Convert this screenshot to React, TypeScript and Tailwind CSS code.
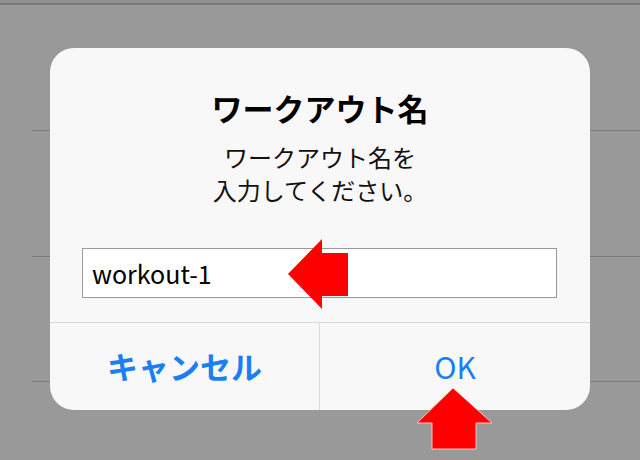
import React from "react";

const jp = { fontFamily: '"Noto Sans CJK JP", "Noto Sans", sans-serif' };

export default function App() {
  return (
    <div className="relative w-[640px] h-[460px] overflow-hidden bg-[#999999]" style={jp}>
      {/* background list behind the overlay */}
      <div className="flex flex-col">
        <div className="h-[3px] bg-[#8f8f8f]" />
        <div className="h-[2px] bg-[#7a7a7a]" />
        <div className="ml-[32px] h-[126px] border-b border-[#7c7c7c]" />
        <div className="ml-[32px] h-[126px] border-b border-[#7c7c7c]" />
        <div className="ml-[32px] h-[125px] border-b border-[#7c7c7c]" />
      </div>

      {/* alert dialog */}
      <div className="absolute left-[50px] top-[48px] w-[540px] h-[362px] rounded-[24px] bg-[#f8f8f8] flex flex-col overflow-hidden">
        <div className="pt-[42px] text-center text-[31px] leading-[36px] font-bold text-black">
          ワークアウト名
        </div>
        <div className="mt-[14px] text-center text-[24px] leading-[33px] text-[#111]">
          <div>ワークアウト名を</div>
          <div>入力してください。</div>
        </div>
        <div className="mt-[42px] ml-[32px] mr-[33px] h-[50px] border border-[#9a9a9a] bg-white flex items-center px-[9px]">
          <span className="text-[25px] leading-none text-black">workout-1</span>
        </div>
        <div className="mt-[24px] flex-1 border-t border-[#dadada] flex">
          <div className="w-[270px] border-r border-[#dadada] flex items-center justify-center pb-[2px]">
            <span className="text-[31px] font-bold text-[#1a7ef5] leading-none">キャンセル</span>
          </div>
          <div className="flex-1 flex items-center justify-center pb-[2px]">
            <span className="text-[30px] text-[#1a7ef5] leading-none">OK</span>
          </div>
        </div>
      </div>

      {/* red arrows pointing at the input and the OK button */}
      <svg className="absolute left-0 top-0" width="640" height="460" viewBox="0 0 640 460">
        <polygon
          points="288,274 322,239 322,253 348,253 348,296 322,296 322,309"
          fill="#ff0000"
        />
        <polygon
          points="453,388 492,423 476,423 476,449 432,449 432,423 417,423"
          fill="#ff0000"
          stroke="#f3c6c0"
          strokeWidth="1"
        />
      </svg>
    </div>
  );
}
